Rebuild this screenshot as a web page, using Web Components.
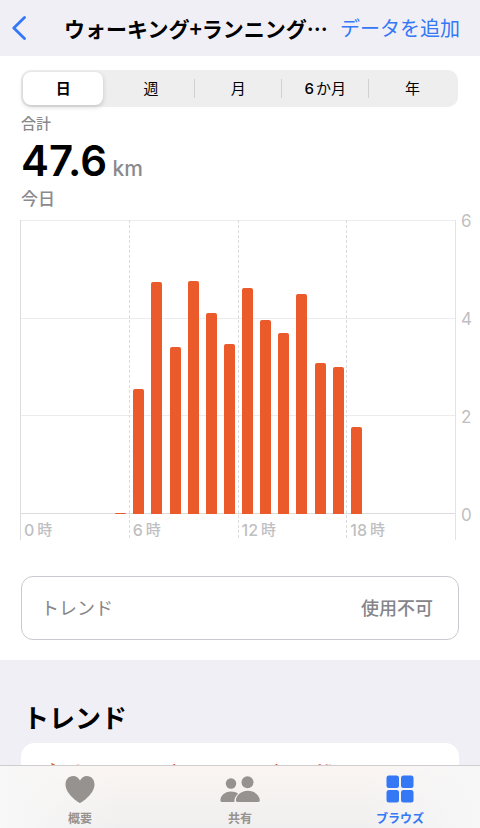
<!DOCTYPE html>
<html lang="ja">
<head>
<meta charset="utf-8">
<meta name="viewport" content="width=device-width, initial-scale=1">
<title>ウォーキング+ランニングの距離</title>
<style>
  body {
    margin: 0;
    background: #fff;
    color: #000;
    font-family: Inter, "Noto Sans CJK JP", sans-serif;
  }
</style>
</head>
<body>
<health-app>
  <nav-bar slot="header" action="データを追加">ウォーキング+ランニング…</nav-bar>
  <range-picker></range-picker>
  <total-summary label="合計" value="47.6" unit="km" date="今日"></total-summary>
  <hour-chart max="6" values="0,0,0,0,0,0.02,2.55,4.74,3.41,4.76,4.11,3.46,4.62,3.95,3.69,4.49,3.09,3,1.77,0,0,0,0,0"></hour-chart>
  <trend-row value="使用不可">トレンド</trend-row>
  <trend-section heading="トレンド">ウォーキング+ランニングの距離</trend-section>
  <tab-bar slot="footer"></tab-bar>
</health-app>

<script>
// Shell: header, scrolling content, tab bar
class HealthApp extends HTMLElement {
  constructor() {
    super();
    this.attachShadow({mode: 'open'});
    this.shadowRoot.innerHTML = `
      <style>
        :host { display: flex; flex-direction: column; height: 100vh; }
        main { flex: 1; min-height: 0; overflow-y: auto; scrollbar-width: none; }
      </style>
      <slot name="header"></slot>
      <main><slot></slot></main>
      <slot name="footer"></slot>
    `;
  }
}

class NavBar extends HTMLElement {
  constructor() {
    super();
    this.attachShadow({mode: 'open'});
  }

  connectedCallback() {
    this.shadowRoot.innerHTML = `
      <style>
        :host { display: block; background: #f0eff5; font-family: "Noto Sans CJK JP", sans-serif; }
        header { display: flex; align-items: center; height: 56px; padding: 0 20px 0 12px; }
        button { border: 0; padding: 0; background: none; color: #3478f6; font: inherit; cursor: pointer; }
        .back { display: flex; width: 16px; }
        h1 { flex: 1; margin: 0; font-size: 21px; line-height: 32px; font-weight: 700; text-align: center; white-space: nowrap; padding-left: 24px; }
        .action { font-size: 20px; line-height: 32px; white-space: nowrap; }
      </style>
      <header>
        <button class="back" aria-label="戻る">
          <svg width="16" height="26" viewBox="0 0 16 26" fill="none" stroke="currentColor" stroke-width="2.8" stroke-linecap="round" stroke-linejoin="round"><path d="M12.5 2.500 1.800 13l10.700 10.500"/></svg>
        </button>
        <h1><slot></slot></h1>
        <button class="action">${this.getAttribute('action')}</button>
      </header>
    `;
  }
}

class RangePicker extends HTMLElement {
  constructor() {
    super();
    this.attachShadow({mode: 'open'});
    this.shadowRoot.innerHTML = `
      <style>
        :host { display: block; padding: 14px 22px 0 21px; }
        div { display: flex; height: 33px; padding: 2px; border-radius: 10px; background: #eeeeef; }
        button { flex: 13 1 0; display: flex; align-items: center; justify-content: center; border: 0; padding: 0; background: none; color: #000; font: inherit; font-size: 15px; line-height: 20px; cursor: pointer; }
        button::after { content: ""; width: 1px; height: 19px; background: #d0d0d3; }
        button::before { content: ""; width: 1px; }
        button span { flex: 1; }
        button[aria-pressed="true"] { flex-grow: 12; border-radius: 8px; background: #fff; font-weight: 700; box-shadow: 0 2px 5px rgba(0, 0, 0, .18); margin-right: 4px; }
        button[aria-pressed="true"]::after, button:last-child::after { background: none; }
        b { font-weight: 500; margin-right: 2px; }
      </style>
      <div role="group" aria-label="期間">
        <button aria-pressed="true"><span>日</span></button>
        <button aria-pressed="false"><span>週</span></button>
        <button aria-pressed="false"><span>月</span></button>
        <button aria-pressed="false"><span><b>6</b>か月</span></button>
        <button aria-pressed="false"><span>年</span></button>
      </div>
    `;

    let buttons = this.shadowRoot.querySelectorAll('button');
    buttons.forEach(button => {
      button.addEventListener('click', () => {
        buttons.forEach(b => b.setAttribute('aria-pressed', b === button));
      });
    });
  }
}

class TotalSummary extends HTMLElement {
  constructor() {
    super();
    this.attachShadow({mode: 'open'});
  }

  connectedCallback() {
    this.shadowRoot.innerHTML = `
      <style>
        :host { display: block; padding: 6px 21px 0; color: #8a8a8e; }
        p { margin: 0; font-weight: 500; white-space: nowrap; }
        .label { font-size: 15px; line-height: 22px; }
        .total { font-size: 21px; line-height: 52px; height: 52px; }
        .total strong { color: #000; font-size: 42px; font-weight: 600; }
        .date { font-size: 17px; line-height: 24px; }
      </style>
      <p class="label">${this.getAttribute('label')}</p>
      <p class="total"><strong>${this.getAttribute('value')}</strong> ${this.getAttribute('unit')}</p>
      <p class="date">${this.getAttribute('date')}</p>
    `;
  }
}

// Bar chart with one bar per hour of the day
class HourChart extends HTMLElement {
  constructor() {
    super();
    this.attachShadow({mode: 'open'});
  }

  connectedCallback() {
    let max = Number(this.getAttribute('max'));
    let bars = this.getAttribute('values').split(',')
      .map(v => `<i style="height: ${v / max * 100}%"></i>`).join('');

    this.shadowRoot.innerHTML = `
      <style>
        :host { display: block; padding: 9px 0 0 20px; color: #bfbfc2; }
        .chart { display: grid; grid-template-columns: 1fr 24px; grid-template-rows: 294px 26px; }
        .hours { grid-area: 1 / 1 / 3 / 2; display: grid; grid-template-columns: repeat(4, 1fr); border-right: 1px solid #e3e3e5; }
        .hours span { display: flex; align-items: flex-end; gap: 3px; padding-left: 4px; font-size: 16px; line-height: 20px; font-weight: 500; background: repeating-linear-gradient(#dcdcde 0 3px, transparent 3px 5px) left / 1px 100% no-repeat; }
        .hours span:first-child { background: linear-gradient(#dcdcde, #dcdcde) left / 1px 100% no-repeat; }
        .hours small { font-size: 15px; }
        .lines { grid-area: 1 / 1; display: flex; flex-direction: column; border-bottom: 1px solid #dcdcde; }
        .lines span { flex: 1; border-top: 1px solid #ececee; }
        .bars { grid-area: 1 / 1; display: grid; grid-template-columns: repeat(24, 1fr); align-items: end; justify-items: center; padding-left: 1px; }
        .bars i { width: 11px; border-radius: 2px 2px 0 0; background: #eb5a2a; }
        .scale { grid-area: 1 / 2; display: flex; flex-direction: column; justify-content: space-between; margin: -9px 0 -11px; padding-left: 5px; font-size: 17px; line-height: 20px; }
      </style>
      <div class="chart">
        <div class="lines"><span></span><span></span><span></span></div>
        <div class="hours">
          <span>0<small>時</small></span><span>6<small>時</small></span><span>12<small>時</small></span><span>18<small>時</small></span>
        </div>
        <div class="bars">${bars}</div>
        <div class="scale"><span>6</span><span>4</span><span>2</span><span>0</span></div>
      </div>
    `;
  }
}

class TrendRow extends HTMLElement {
  constructor() {
    super();
    this.attachShadow({mode: 'open'});
  }

  connectedCallback() {
    this.shadowRoot.innerHTML = `
      <style>
        :host { display: block; padding: 36px 21px 20px; }
        button { display: flex; justify-content: space-between; align-items: center; width: 100%; height: 64px; padding: 2px 25px 0 19px; border: 1px solid #c9c9d0; border-radius: 12px; background: #fff; color: #85858a; font: inherit; font-size: 18px; line-height: 26px; cursor: pointer; }
        b { font-weight: 500; }
      </style>
      <button><slot></slot><b>${this.getAttribute('value')}</b></button>
    `;
  }
}

class TrendSection extends HTMLElement {
  constructor() {
    super();
    this.attachShadow({mode: 'open'});
  }

  connectedCallback() {
    this.shadowRoot.innerHTML = `
      <style>
        :host { display: block; padding: 40px 21px 24px; background: #f0eff5; }
        h2 { margin: 0 0 5px; padding-left: 2px; font-size: 26px; line-height: 38px; font-weight: 700; }
        article { height: 160px; padding: 18px 24px; border-radius: 14px; background: #fff; }
        h3 { display: flex; align-items: center; gap: 6px; margin: 0; color: #e0501f; font-size: 18px; line-height: 26px; font-weight: 700; }
      </style>
      <h2>${this.getAttribute('heading')}</h2>
      <article>
        <h3>
          <svg width="18" height="22" viewBox="0 0 18 22" fill="currentColor"><path d="M6 0c6 2 11 7 10 14-1 5-4 8-8 8s-7-3-7-7c0-3 1-5 3-7 0 2 1 3 2 3 2-3 2-7 0-11z"/></svg>
          <slot></slot>
        </h3>
      </article>
    `;
  }
}

class TabBar extends HTMLElement {
  constructor() {
    super();
    this.attachShadow({mode: 'open'});
    this.shadowRoot.innerHTML = `
      <style>
        :host { display: block; }
        nav { display: flex; height: 62px; border-top: 1px solid #cfcdd0; background: linear-gradient(90deg, #f8f8f8, transparent 25% 75%, #f7f7f8), linear-gradient(#faf5f2, #f0efef); }
        a { flex: 1 1 0; display: flex; flex-direction: column; align-items: center; gap: 6px; padding-top: 8px; color: #96928f; font-size: 12px; line-height: 18px; font-weight: 700; text-decoration: none; }
        a[aria-current] { color: #3478f6; }
        svg { height: 30px; fill: currentColor; flex: none; }
      </style>
      <nav>
        <a href="#summary">
          <svg width="30" viewBox="0 0 30 30"><path d="M15 29C13.800 29 .5 20 .5 10.500C.5 5.500 3.800 2 8 2c3.200 0 5.700 1.700 7 4.600C16.300 3.700 18.800 2 22 2c4.200 0 7.500 3.500 7.500 8.500C29.500 20 16.200 29 15 29z"/></svg>
          概要
        </a>
        <a href="#sharing">
          <svg width="40" viewBox="0 0 40 30"><circle cx="11" cy="9.500" r="5.200"/><path d="M2 28C.8 28 .4 27.400.4 26.300.4 22 4.500 17.500 11 17.500c3 0 5.400.9 7.200 2.300-2.700 2.200-4.200 5-3.800 8.200z"/><circle cx="27.500" cy="8.200" r="6"/><path d="M17.600 28c-1.200 0-1.700-.6-1.700-1.700 0-4.300 4.500-9.600 11.900-9.600s12 5.300 12 9.600c0 1.100-.5 1.700-1.700 1.700z"/></svg>
          共有
        </a>
        <a href="#browse" aria-current="page">
          <svg width="28" viewBox="0 0 28 30"><rect x=".5" y="1.500" width="12.500" height="12.500" rx="2.500"/><rect x="15" y="1.500" width="12.500" height="12.500" rx="2.500"/><rect x=".5" y="16" width="12.500" height="12.500" rx="2.500"/><rect x="15" y="16" width="12.500" height="12.500" rx="2.500"/></svg>
          ブラウズ
        </a>
      </nav>
    `;
  }
}

window.customElements.define('health-app', HealthApp);
window.customElements.define('nav-bar', NavBar);
window.customElements.define('range-picker', RangePicker);
window.customElements.define('total-summary', TotalSummary);
window.customElements.define('hour-chart', HourChart);
window.customElements.define('trend-row', TrendRow);
window.customElements.define('trend-section', TrendSection);
window.customElements.define('tab-bar', TabBar);
</script>
</body>
</html>
